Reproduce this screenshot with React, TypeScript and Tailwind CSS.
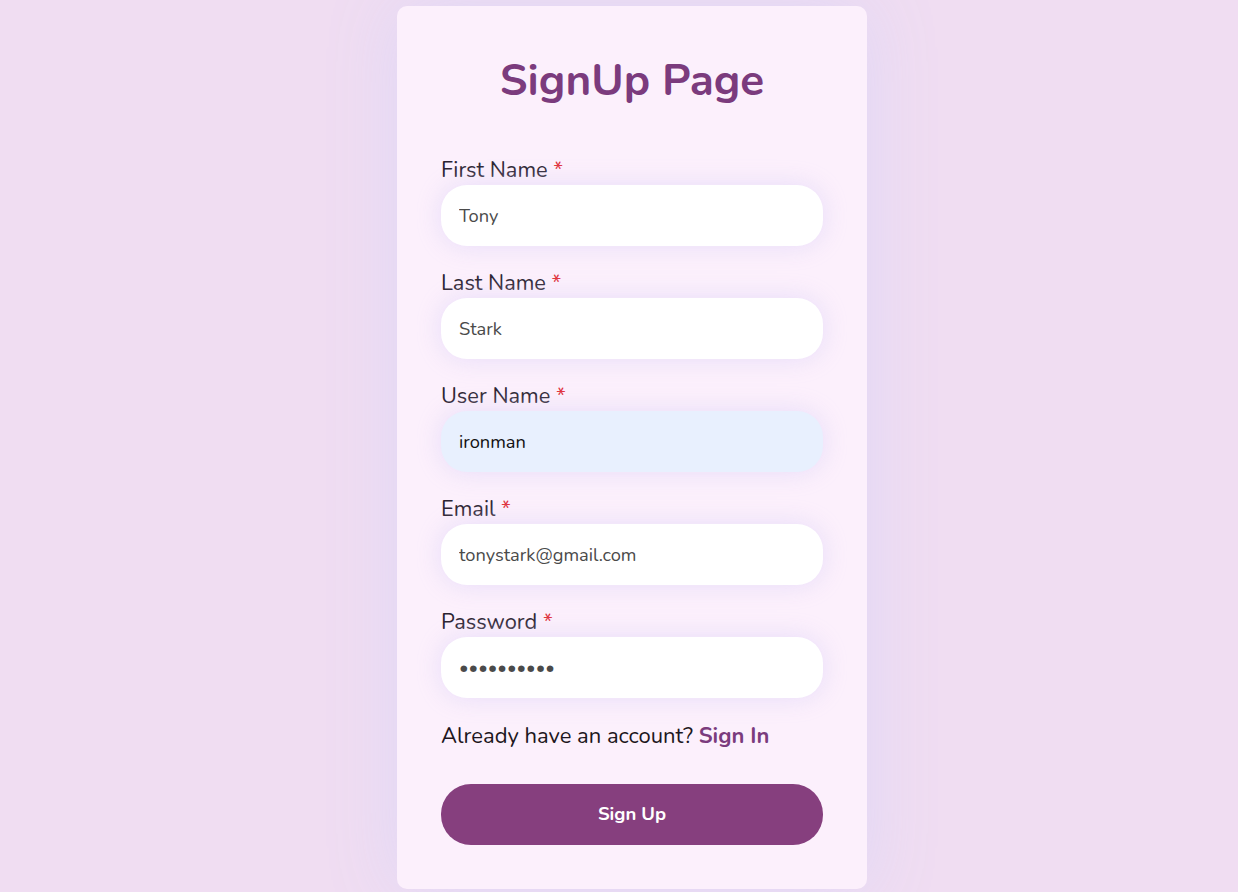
import { useState } from "react";

const FIELDS = [
    { label: "First Name", value: "Tony", type: "text", autofill: false },
    { label: "Last Name", value: "Stark", type: "text", autofill: false },
    { label: "User Name", value: "ironman", type: "text", autofill: true },
    { label: "Email", value: "tonystark@gmail.com", type: "email", autofill: false },
    { label: "Password", value: "ironman123", type: "password", autofill: false },
];

export default function App() {
    const [values, setValues] = useState(FIELDS.map(f => f.value));

    return (
        <div
            className="min-h-screen w-full bg-[#f0ddf2] flex justify-center pt-[6px] pl-[26px]"
            style={{ fontFamily: '"Nunito", Lato, "Open Sans", sans-serif' }}
        >
            <div className="w-[470px] h-[883px] rounded-[10px] bg-[#fcf0fc] px-[44px] pt-[45px] shadow-[0_0_70px_rgba(221,214,246,0.9)]">
                {/* title */}
                <h1 className="text-center text-[44px] leading-[60px] font-bold text-[#7b3b7d] mb-[45px]">
                    SignUp Page
                </h1>

                {/* fields */}
                <form className="flex flex-col gap-[23px]" onSubmit={e => e.preventDefault()}>
                    {FIELDS.map((f, i) => (
                        <div key={f.label} className="flex flex-col gap-[1px]">
                            <label className="text-[21.8px] leading-[28px] text-[#2a2230]">
                                {f.label} <span className="text-[#e0303a]">*</span>
                            </label>
                            <input
                                type={f.type}
                                value={values[i]}
                                onChange={e => {
                                    const next = [...values];
                                    next[i] = e.target.value;
                                    setValues(next);
                                }}
                                className={
                                    "h-[61px] w-full rounded-[26px] px-[18px] text-[18.3px] outline-none shadow-[0_0_24px_rgba(225,215,248,0.8)] " +
                                    (f.autofill
                                        ? "bg-[#e8f0fe] text-[#111]"
                                        : "bg-white text-[#4a4a4a]")
                                }
                            />
                        </div>
                    ))}

                    {/* sign-in link */}
                    <p className="text-[22px] leading-[28px] text-[#1d1620] mt-[1px]">
                        Already have an account?{" "}
                        <a href="#" className="font-bold text-[#7b3b7d]">
                            Sign In
                        </a>
                    </p>

                    <button
                        type="submit"
                        className="mt-[11px] h-[61px] w-full rounded-[30px] bg-[#863f7e] text-white text-[18.5px] font-bold"
                    >
                        Sign Up
                    </button>
                </form>
            </div>
        </div>
    );
}
